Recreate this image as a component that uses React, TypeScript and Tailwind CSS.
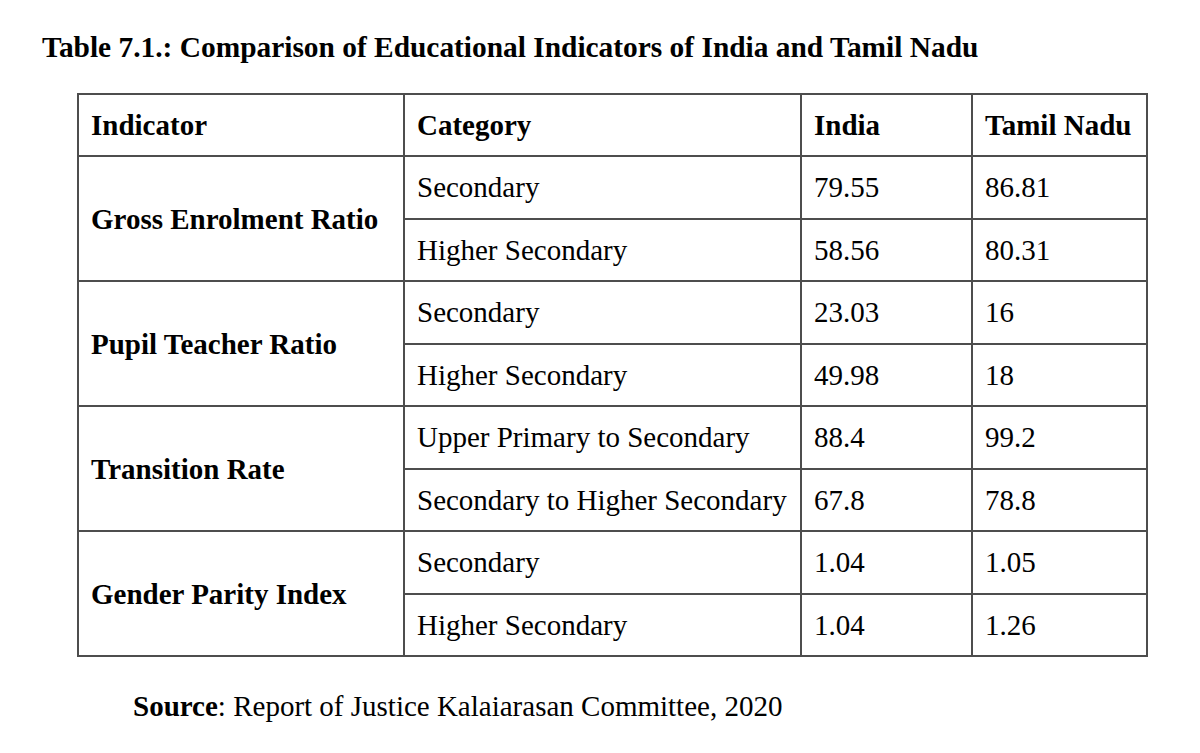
const rows = [
  { indicator: 'Gross Enrolment Ratio', items: [['Secondary', '79.55', '86.81'], ['Higher Secondary', '58.56', '80.31']] },
  { indicator: 'Pupil Teacher Ratio', items: [['Secondary', '23.03', '16'], ['Higher Secondary', '49.98', '18']] },
  { indicator: 'Transition Rate', items: [['Upper Primary to Secondary', '88.4', '99.2'], ['Secondary to Higher Secondary', '67.8', '78.8']] },
  { indicator: 'Gender Parity Index', items: [['Secondary', '1.04', '1.05'], ['Higher Secondary', '1.04', '1.26']] },
];

const cell = 'border-2 border-[#4d4d4d] px-[12px] align-middle';

export default function App() {
  return (
    <div className="w-[1200px] h-[753px] bg-white text-black font-['Liberation_Serif','Times_New_Roman',serif]">
      <h1 className="pl-[42px] pt-[31px] text-[29.4px] leading-[32px] font-bold">
        Table 7.1.: Comparison of Educational Indicators of India and Tamil Nadu
      </h1>
      <table className="ml-[77px] mt-[30px] w-[1069px] border-collapse table-fixed">
        <colgroup>
          <col className="w-[326px]" />
          <col className="w-[397px]" />
          <col className="w-[171px]" />
          <col className="w-[175px]" />
        </colgroup>
        <thead>
          <tr className="h-[62px] text-[29px] leading-[32px] font-bold">
            <td className={cell}>Indicator</td>
            <td className={cell}>Category</td>
            <td className={cell}>India</td>
            <td className={cell}>Tamil Nadu</td>
          </tr>
        </thead>
        <tbody>
          {rows.map((g) =>
            g.items.map((it, i) => (
              <tr key={g.indicator + i} className="h-[62.5px] text-[29px] leading-[32px]">
                {i === 0 && (
                  <td rowSpan={2} className={cell + ' font-bold'}>
                    {g.indicator}
                  </td>
                )}
                <td className={cell + ' whitespace-nowrap'}>{it[0]}</td>
                <td className={cell}>{it[1]}</td>
                <td className={cell}>{it[2]}</td>
              </tr>
            ))
          )}
        </tbody>
      </table>
      <p className="pl-[133px] mt-[33px] text-[29px] leading-[32px]">
        <span className="font-bold">Source</span>: Report of Justice Kalaiarasan Committee, 2020
      </p>
    </div>
  );
}
